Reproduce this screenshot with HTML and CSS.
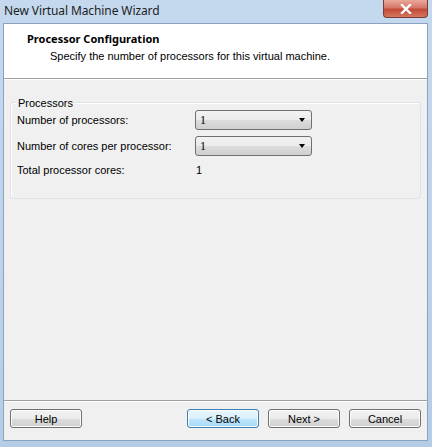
FILE: index.html
```html
<!DOCTYPE html>
<html lang="en">
<head>
  <meta charset="UTF-8">
  <title>New Virtual Machine Wizard</title>
  <link rel="stylesheet" href="styles.css">
</head>
<body>
  <div class="window">
    <div class="titlebar">
      <span class="title">New Virtual Machine Wizard</span>
      <div class="close">
        <svg width="14" height="10" viewBox="0 0 14 10">
          <path d="M3 1 L11 9 M11 1 L3 9" stroke="#fff" stroke-width="2.4" stroke-linecap="square"/>
        </svg>
      </div>
    </div>

    <div class="client">
      <div class="header">
        <div class="header-title">Processor Configuration</div>
        <div class="header-sub">Specify the number of processors for this virtual machine.</div>
      </div>

      <div class="content">
        <div class="group">
          <span class="legend">Processors</span>
          <div class="row">
            <span class="label">Number of processors:</span>
            <div class="combo"><span>1</span><span class="arrow"></span></div>
          </div>
          <div class="row">
            <span class="label">Number of cores per processor:</span>
            <div class="combo"><span>1</span><span class="arrow"></span></div>
          </div>
          <div class="row total">
            <span class="label">Total processor cores:</span>
            <span class="value">1</span>
          </div>
        </div>
      </div>

      <div class="footer">
        <button class="btn">Help</button>
        <div class="spacer"></div>
        <button class="btn focus">&lt; Back</button>
        <button class="btn">Next &gt;</button>
        <button class="btn">Cancel</button>
      </div>
    </div>
  </div>
</body>
</html>
```

FILE: styles.css
```css
html, body {
  margin: 0;
  padding: 0;
}
body {
  font-family: "Liberation Sans", Arial, sans-serif;
  font-size: 11px;
  color: #000;
}
.window {
  width: 432px;
  height: 447px;
  box-sizing: border-box;
  padding: 0 4px 6px 3px;
  display: flex;
  flex-direction: column;
  background: linear-gradient(to bottom, #c4d9ee 0%, #bcd3ea 60%, #b4cde6 100%);
}
.titlebar {
  height: 23px;
  display: flex;
  align-items: flex-start;
  flex-shrink: 0;
}
.title {
  font-family: "Noto Sans", Arial, sans-serif;
  font-size: 12px;
  color: #1e1e1e;
  padding: 2px 0 0 1px;
  letter-spacing: -0.1px;
}
.close {
  margin-left: auto;
  width: 43px;
  height: 17px;
  border: 1px solid #7a3b3b;
  border-top: none;
  border-radius: 0 0 4px 4px;
  background: linear-gradient(to bottom, #e9a99c 0%, #d47766 45%, #c24a37 55%, #d4765f 100%);
  display: flex;
  align-items: center;
  justify-content: center;
}
.client {
  flex: 1;
  display: flex;
  flex-direction: column;
  border: 1px solid #8aa2bd;
  background: #f0f0f0;
}
.header {
  height: 55px;
  background: #fff;
  border-bottom: 1px solid #a0a0a0;
  box-shadow: 0 1px 0 #fff;
  box-sizing: border-box;
  padding: 8px 0 0 23px;
}
.header-title {
  font-family: "Noto Sans", Arial, sans-serif;
  font-weight: bold;
  line-height: 14px;
}
.header-sub {
  padding-left: 23px;
  margin-top: 3px;
  line-height: 14px;
}
.content {
  flex: 1;
  padding: 23px 6px 0 6px;
}
.group {
  position: relative;
  height: 88px;
  border: 1px solid #dde3e8;
  border-radius: 3px;
  box-shadow: inset 1px 1px 0 #fff;
  padding: 7px 0 0 6px;
}
.legend {
  position: absolute;
  top: -7px;
  left: 5px;
  padding: 0 2px;
  background: #f0f0f0;
  line-height: 14px;
}
.row {
  display: flex;
  align-items: center;
  height: 20px;
  margin-bottom: 6px;
}
.label {
  width: 178px;
}
.combo {
  width: 105px;
  height: 18px;
  border: 1px solid #707070;
  border-radius: 3px;
  background: linear-gradient(to bottom, #f2f2f2 0%, #ebebeb 50%, #dddddd 51%, #cfcfcf 100%);
  display: flex;
  align-items: center;
  padding: 0 6px 0 4px;
  font-family: "Liberation Serif", serif;
  font-size: 12px;
}
.combo .arrow {
  margin-left: auto;
  width: 0;
  height: 0;
  border-left: 3.5px solid transparent;
  border-right: 3.5px solid transparent;
  border-top: 4px solid #000;
}
.total {
  height: 16px;
}
.value {
  padding-left: 1px;
}
.footer {
  height: 31px;
  border-top: 1px solid #a0a0a0;
  box-shadow: inset 0 1px 0 #fff;
  display: flex;
  align-items: flex-start;
  padding: 8px 6px 0 6px;
  gap: 9px;
}
.spacer {
  flex: 1;
}
.btn {
  width: 72px;
  height: 19px;
  margin: 0;
  padding: 0;
  font-family: "Liberation Sans", Arial, sans-serif;
  font-size: 11px;
  color: #000;
  border: 1px solid #707070;
  border-radius: 3px;
  background: linear-gradient(to bottom, #f2f2f2 0%, #ebebeb 50%, #dddddd 51%, #cfcfcf 100%);
  box-shadow: inset 0 0 0 1px #fcfcfc;
}
.btn.focus {
  border-color: #3c7fb1;
  background: linear-gradient(to bottom, #eaf6fd 0%, #d9f0fc 50%, #bee6fd 51%, #a7d9f5 100%);
}
```
